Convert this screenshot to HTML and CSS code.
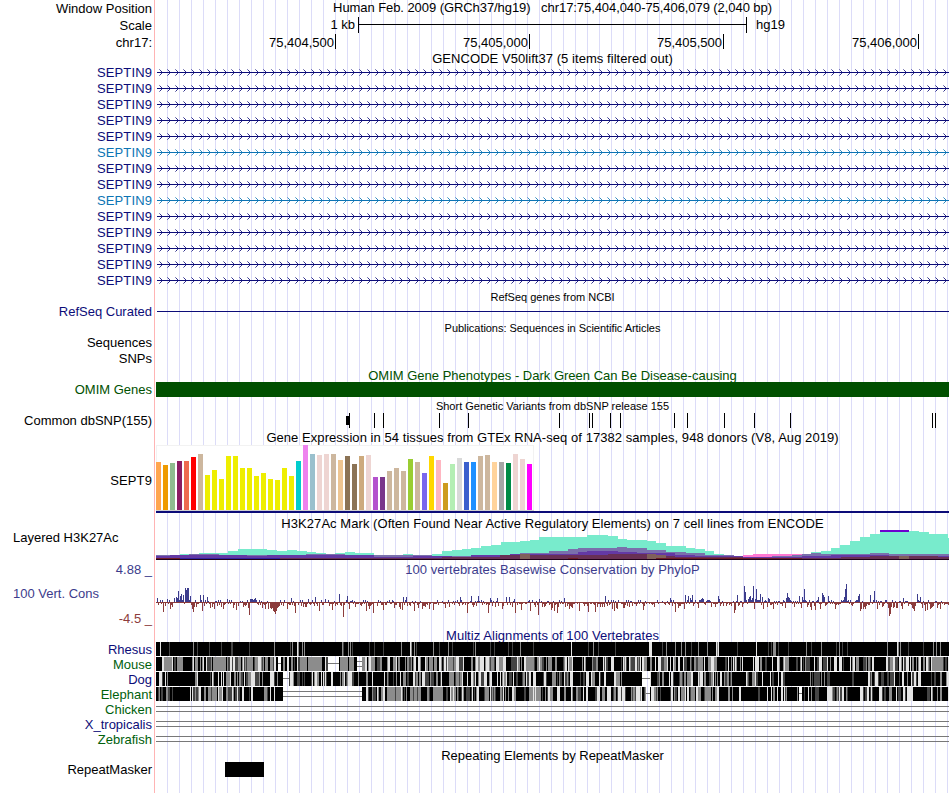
FILE: index.html
```html
<!DOCTYPE html>
<html lang="en">
<head>
<meta charset="utf-8">
<title>Human hg19 chr17:75,404,040-75,406,079</title>
<link rel="stylesheet" href="styles.css">
</head>
<body>
<main class="browser" id="browser"></main>
<script src="tracks.js"></script>
</body>
</html>
```
FILE: styles.css
```css
body {
  margin: 0;
  background: #fff;
  font-family: "Liberation Sans", Arial, sans-serif;
  font-size: 13px;
  line-height: 15px;
  color: #000;
}

.browser {
  display: flex;
  flex-direction: column;
  width: 949px;
  height: 793px;
  overflow: hidden;
  background:
    linear-gradient(#ffb4b4, #ffb4b4) 154px 0 / 1px 100% no-repeat,
    repeating-linear-gradient(90deg, #dcdcf8 0 1px, transparent 1px 12px) 167px 0 / 782px 100% no-repeat;
}

.row {
  display: grid;
  grid-template-columns: 156px 793px;
  flex: none;
}

.label {
  display: flex;
  flex-direction: column;
  padding-right: 4px;
  text-align: right;
  white-space: pre;
}
.label.left { padding-left: 13px; text-align: left; }
.title { text-align: center; white-space: pre; }
.title.small { font-size: 11px; line-height: 12px; }
.title.tight { letter-spacing: -0.07px; }
.title.loose { letter-spacing: 0.055px; }
.title.small.snug { letter-spacing: -0.04px; }
.gene { letter-spacing: 0.12px; }
.plot { display: block; overflow: visible; }
.crisp { shape-rendering: crispEdges; }

.navy { color: #0c0c78; }
.azure { color: #0c74b4; }
.green { color: #005000; }
.leaf { color: #00600c; }
.slate { color: #3c3c8c; }
.brick { color: #8c3c3c; }

.conservation { display: flex; flex-direction: column; gap: 10px; }
.conservation .name { padding-left: 13px; text-align: left; }
.p0 { padding-top: 0; }
.p1 { padding-top: 1px; }
.p2 { padding-top: 2px; }
.p3 { padding-top: 3px; }
.p9 { padding-top: 9px; }
.p28 { padding-top: 28px; }
```
FILE: tracks.js
```javascript
const LEFT = 156, WIDTH = 793, RIGHT = 949;
const root = document.getElementById('browser');

function row(height, label, content) {
  const el = document.createElement('div');
  el.className = 'row';
  el.style.height = height + 'px';
  el.innerHTML = (label || '<div></div>') + (content || '');
  root.appendChild(el);
}
const label = (text, cls = 'p1') => `<div class="label ${cls}">${text}</div>`;
const title = (text, cls = 'p1') => `<div class="title ${cls}">${text}</div>`;
/* Plots are drawn in window x coordinates, with y relative to the row. */
const plot = (h, body, cls = 'crisp') =>
  `<svg class="plot ${cls}" width="${WIDTH}" height="${h}" viewBox="${LEFT} 0 ${WIDTH} ${h}">${body}</svg>`;
const rect = (x, y, w, h, fill) => `<rect x="${x}" y="${y}" width="${w}" height="${h}" fill="${fill}"/>`;
const text = (x, y, s, anchor = 'start') => `<text x="${x}" y="${y}" text-anchor="${anchor}">${s}</text>`;

function random(seed) {
  let s = seed;
  return () => {
    s = (s * 1664525 + 1013904223) % 4294967296;
    return s / 4294967296;
  };
}

/* Position and scale */
row(17, label('Window Position'), title('Human Feb. 2009 (GRCh37/hg19)   chr17:75,404,040-75,406,079 (2,040 bp)', 'p0 tight'));
row(17, label('Scale'), plot(17,
  text(355, 12, '1 kb', 'end') + rect(358, 0, 1, 16, '#000') + rect(358, 7, 389, 1, '#000') +
  rect(746, 0, 1, 16, '#000') + text(756, 12, 'hg19')));
row(16, label('chr17:'), plot(16, [[335, '75,404,500'], [529, '75,405,000'], [723, '75,405,500'], [918, '75,406,000']]
  .map(([x, s]) => text(x - 1, 13, s, 'end') + rect(x, 0, 1, 15, '#000')).join('')));

/* Gene models: each arrowhead steps one pixel per row, fading at its ends */
row(14, '', title('GENCODE V50lift37 (5 items filtered out)', 'p1 loose'));
let tips = '', ends = '';
for (let x = 159; x < 947; x += 8) {
  tips += `M${x + 1} 6h1v1h-1zM${x + 2} 7h1v1h-1zM${x + 2} 9h1v1h-1zM${x + 1} 10h1v1h-1z`;
  ends += `M${x} 5h1v1h-1zM${x} 11h1v1h-1z`;
}
for (let i = 0; i < 14; i++) {
  const alt = i === 5 || i === 8;
  const color = alt ? '#0c74b4' : '#0c0c78';
  row(16, label('SEPTIN9', 'p1 gene ' + (alt ? 'azure' : 'navy')),
    plot(16, rect(157, 8, 792, 1, color) + `<path d="${tips}" fill="${color}" fill-opacity=".85"/>` +
      `<path d="${ends}" fill="${color}" fill-opacity=".5"/>`));
}
row(15, '', title('RefSeq genes from NCBI', 'small p3'));
row(17, label('RefSeq Curated', 'p1 navy'), plot(17, rect(157, 8, 792, 1, '#0c0c78')));

/* Literature */
row(14, '', title('Publications: Sequences in Scientific Articles', 'small p2 snug'));
row(16, label('Sequences'));
row(16, label('SNPs'));
row(16, '', title('OMIM Gene Phenotypes - Dark Green Can Be Disease-causing', 'p2 green'));
row(15, label('OMIM Genes', 'p0 green'), plot(15, rect(156, 0, 793, 15, '#005000')));

/* Variants */
row(16, '', title('Short Genetic Variants from dbSNP release 155', 'small p3'));
row(16, label('Common dbSNP(155)', 'p0'), plot(16, rect(346, 3, 3, 9, '#000') +
  [349, 374, 383, 439, 468, 559, 589, 592, 610, 620, 674, 687, 724, 754, 790, 932, 935]
    .map(x => rect(x, 0, 1, 15, '#000')).join('')));

/* Tissue expression */
row(16, '', title('Gene Expression in 54 tissues from GTEx RNA-seq of 17382 samples, 948 donors (V8, Aug 2019)', 'p1 loose'));
const heights = [48,45,47,49,49,53,56,35,40,31,54,54,42,42,34,37,31,30,42,34,49,65,56,55,56,56,50,
  54,46,54,55,33,33,39,42,39,51,48,37,54,50,27,46,52,48,48,54,55,48,48,47,56,51,46];
const colors = ('ffa54f ee9a00 8fbc8f 8b1c62 ee6a50 ff0000 cdb79e ' + 'eeee00 '.repeat(13) +
  '00cdcd ee82ee 9ac0cd eed5d2 eed5d2 cdb79e eec591 8b7355 8b7355 cdaa7d eed5d2 b452cd 7a378b ' +
  'cdb79e cdb79e cdb79e 9acd32 cdb79e 7a67ee ffd700 ffb6c1 cd9b1d b4eeb4 d9d9d9 3a5fcd 1e90ff ' +
  'cdb79e cdb79e ffd39b a6a6a6 008b45 eed5d2 eed5d2 ff00ff').split(' ');
row(68, label('SEPT9', 'p28 gene'), plot(68,
  rect(156, 0, 378, 66, '#f2f2f2') + rect(157, 1, 376, 64, '#fff') + rect(156, 65, 378, 1, '#d0d0d0') +
  heights.map((h, i) => rect(LEFT + i * 7, 65 - h, 5, h, '#' + colors[i])).join('') +
  rect(156, 66, 793, 2, '#0c0c78')));

/* Histone marks: each layer is a list of [start x, top y] steps in window coordinates */
row(17, '', title('H3K27Ac Mark (Often Found Near Active Regulatory Elements) on 7 cell lines from ENCODE', 'p3 loose'));
const layers = [
  ['#ff78d2', [[743,555],[753,554],[802,559]]],
  ['#78ebcc', [[156,556],[180,554],[199,553],[228,551],[238,549],[267,550],[277,551],[287,550],[297,551],[307,552],
    [316,553],[326,554],[335,553],[345,552],[355,553],[374,555],[403,554],[413,555],[432,554],[442,551],[452,550],
    [462,549],[471,548],[481,546],[491,545],[501,542],[520,541],[530,540],[539,537],[587,535],[608,536],[618,539],
    [627,540],[647,541],[656,543],[666,546],[686,548],[695,549],[705,551],[714,554],[724,555],[734,556],[743,559],
    [811,552],[821,551],[831,548],[840,545],[850,541],[860,537],[870,534],[880,531],[919,532],[929,534],[948,538]]],
  ['#7a70ac', [[156,555],[189,554],[219,555],[306,554],[345,555],[374,555],[432,556],[471,555],[510,554],[520,553],
    [549,551],[568,549],[578,548],[617,547],[627,548],[647,550],[666,552],[686,553],[705,555],[734,556],[743,559],
    [772,556],[792,555],[802,554],[811,553],[821,554],[870,553],[889,554]]],
  ['#6439a5', [[156,556],[170,555],[247,556],[267,555],[374,557],[413,556],[452,557],[471,555],[491,555],[510,554],
    [559,554],[578,552],[587,551],[618,552],[637,553],[675,555],[695,556],[743,557],[802,556],[831,555],[889,556]]],
  ['#693055', [[156,558],[180,559],[267,558],[442,557],[471,557],[500,555],[530,555],[608,554],[647,555],[666,556],
    [675,557],[743,558],[841,557],[870,556],[938,557]]],
  ['#80605a', [[520,554],[530,559],[647,554],[656,555],[666,559],[899,556],[909,559]]],
  ['#701c28', [[156,558],[180,559],[568,558],[578,559],[656,558],[802,559]]]
];
const stepPath = pts => `M${pts[0][0]} 29` + pts.map(([x, y], i) =>
  `V${y - 530}H${pts[i + 1] ? pts[i + 1][0] : (y === 559 ? x : RIGHT)}`).join('') + 'V29Z';
row(31, label('Layered H3K27Ac', 'left p0'), plot(31,
  layers.map(([c, pts]) => `<path d="${stepPath(pts)}" fill="${c}"/>`).join('') +
  rect(880, 0, 29, 2, '#6c00d0') + rect(180, 28, 100, 1, '#3424a0') + rect(156, 29, 793, 1, '#200018')));

/* Conservation score, one signed value per pixel column */
row(16, label('4.88 _', 'p1 slate'), title('100 vertebrates Basewise Conservation by PhyloP', 'p1 slate loose'));
const peaks = `157,4 163,-9 167,3 170,-6 174,4 176,5 177,4 178,11 179,2 180,6 181,8 182,2 183,7 185,14 186,12 187,14
188,14 189,2 190,6 192,-6 193,-9 196,-4 200,7 202,-8 203,7 207,5 214,-6 223,-6 227,3 233,-5 236,-7 243,-4 249,-12
250,3 251,3 252,3 253,2 254,3 255,4 256,2 265,-6 268,-6 270,-5 271,-6 272,-5 273,-8 274,-9 275,-11 276,-8 277,-5
278,-4 279,-3 287,-6 291,4 295,-10 308,3 315,5 319,-8 325,3 332,-7 339,8 343,-14 347,6 366,-8 373,-10 383,-7
402,-7 403,5 406,5 414,-8 433,-7 460,5 467,-10 471,6 478,6 488,-10 490,4 497,4 506,5 509,5 514,3 515,-10 521,-7
530,-8 538,-12 539,3 551,-7 554,-8 557,-10 564,4 579,-8 588,-9 595,-9 605,6 614,-8 643,-7 670,4 675,-9 685,7
688,6 690,4 692,7 701,3 702,4 703,3 718,6 719,3 734,-10 735,-7 737,7 744,16 745,10 746,2 748,3 749,5 750,6 751,2
752,4 753,16 754,-6 755,3 756,13 760,8 762,5 763,-6 768,4 769,3 773,-6 786,4 787,9 788,5 789,4 799,6 802,5 804,13
811,-7 815,-7 818,5 820,-6 822,9 823,7 824,5 828,6 835,-6 844,5 845,13 846,18 858,6 859,8 860,-8 863,-6 870,7
874,11 888,-5 889,-13 890,-11 891,-4 896,-5 897,-5 903,4 912,-5 913,-6 914,-8 917,8 920,5 925,-8 927,-7 930,-6`;
const scores = {};
const rnd = random(17);
for (let x = LEFT; x < RIGHT; x++) {
  const r = rnd(), upper = x > 680 ? .36 : .2;
  scores[x] = r < upper ? Math.ceil(rnd() * 2) : r < .45 ? 0 : -Math.ceil(rnd() * rnd() * 7);
}
peaks.split(/\s+/).forEach(p => { const [x, v] = p.split(',').map(Number); scores[x] = v; });
row(50, label('<div class="conservation"><div class="name slate">100 Vert. Cons</div><div class="brick">-4.5 _</div></div>', 'p9'),
  plot(50, rect(156, 25, 793, 1, '#8c3c3c') + Object.entries(scores).map(([x, v]) =>
    v > 0 ? rect(x, 25 - v, 1, v, '#3c3c8c') : v < 0 ? rect(x, 26, 1, -v, '#8c3c3c') : '').join('')));

/* Alignments */
row(15, '', title('Multiz Alignments of 100 Vertebrates', 'p1 navy loose'));
const ticks = `160w 169d 193g 197d 209d 221d 231d 232d 249d 274g 290d 292g 297w 298g 302g 304g 342g 343d 348g 350g
352d 369d 374d 383d 401g 410w 416d 411g 414g 433g 439d 448g 452d 473d 475g 490d 494d 508d 512d 520g 533d 571w 588d
593g 598d 615d 649w 650w 651w 662d 666g 675g 681g 685g 691d 698g 707g 716w 717g 718w 737d 756w 768d 771d 773g 774g
775g 778d 788d 806g 811d 821g 836d 839g 842d 847d 887g 897w 898g 900g 908d 923d 933g 936g 940g`;
const tone = { w: '#e4e4e4', g: '#8c8c8c', d: '#444', k: '#000' };
row(15, label('Rhesus', 'p0 navy'), plot(15, rect(156, 0, 793, 14, '#000') +
  ticks.split(/\s+/).map(t => rect(parseInt(t, 10), 0, 1, 14, tone[t.slice(-1)])).join('')));

/* blocks: [from, to, tone]; gaps: [from, to, number of lines] */
function alignment(name, cls, seed, blocks, gaps) {
  const next = random(seed);
  let body = '';
  for (let x = LEFT; x < RIGHT;) {
    const r = next(), w = Math.min(RIGHT - x, 1 + Math.floor(next() * next() * 3.4));
    const dark = (x > 740 ? .1 : 0) - (name === 'Mouse' && x < 560 ? .14 : 0);
    const fill = r < .42 + dark ? '#000' : r < .6 + dark ? '#444' : r < .82 ? '#8c8c8c' : '#e4e4e4';
    body += rect(x, 0, w, 14, fill);
    x += w;
  }
  body += blocks.map(([a, b, t]) => rect(a, 0, b - a, 14, tone[t])).join('');
  const id = 'clip-' + name;
  let x = LEFT, clip = '', lines = '';
  gaps.forEach(([a, b, n]) => {
    clip += rect(x, 0, a - x, 14, '#000');
    lines += n === 1 ? rect(a, 6, b - a, 1, '#787878')
      : rect(a, 4, b - a, 1, '#787878') + rect(a, 9, b - a, 1, '#787878');
    x = b;
  });
  clip += rect(x, 0, RIGHT - x, 14, '#000');
  row(15, label(name, 'p0 ' + cls), plot(15,
    `<clipPath id="${id}">${clip}</clipPath><g clip-path="url(#${id})">${body}</g>${lines}`));
}
alignment('Mouse', 'leaf', 41,
  [[156,160,'k'],[185,192,'k'],[213,223,'g'],[265,268,'g'],[270,273,'g'],[308,321,'g'],[340,345,'g'],[362,365,'g'],
   [526,534,'g'],[577,582,'k'],[743,753,'k'],[755,759,'w'],[834,837,'w'],[878,886,'k'],[932,943,'g']],
  [[278,281,1],[328,339,1],[357,362,2]]);
alignment('Dog', 'navy', 92,
  [[180,192,'k'],[202,210,'k'],[333,340,'k'],[449,454,'g'],[570,573,'w'],[608,614,'k'],[622,629,'k'],[630,642,'k'],
   [732,739,'k'],[740,745,'k'],[787,799,'k'],[802,810,'k'],[841,849,'k']],
  [[283,289,1],[642,650,1]]);
alignment('Elephant', 'leaf', 133,
  [[176,182,'k'],[183,190,'k'],[212,217,'g'],[253,263,'k'],[276,283,'k'],[362,365,'k'],[388,395,'g'],[433,443,'g'],
   [705,711,'g'],[742,755,'k'],[788,793,'k'],[820,827,'k'],[850,857,'k']],
  [[283,362,2],[646,650,1],[799,802,1]]);
[['Chicken', 'leaf'], ['X_tropicalis', 'navy'], ['Zebrafish', 'leaf']].forEach(([name, cls]) =>
  row(15, label(name, 'p0 ' + cls), plot(15, rect(156, 4, 793, 1, '#787878') + rect(156, 9, 793, 1, '#787878'))));

/* Repeats */
row(15, '', title('Repeating Elements by RepeatMasker'));
row(31, label('RepeatMasker', 'p0'), plot(31, rect(225, 0, 39, 15, '#000')));
```
